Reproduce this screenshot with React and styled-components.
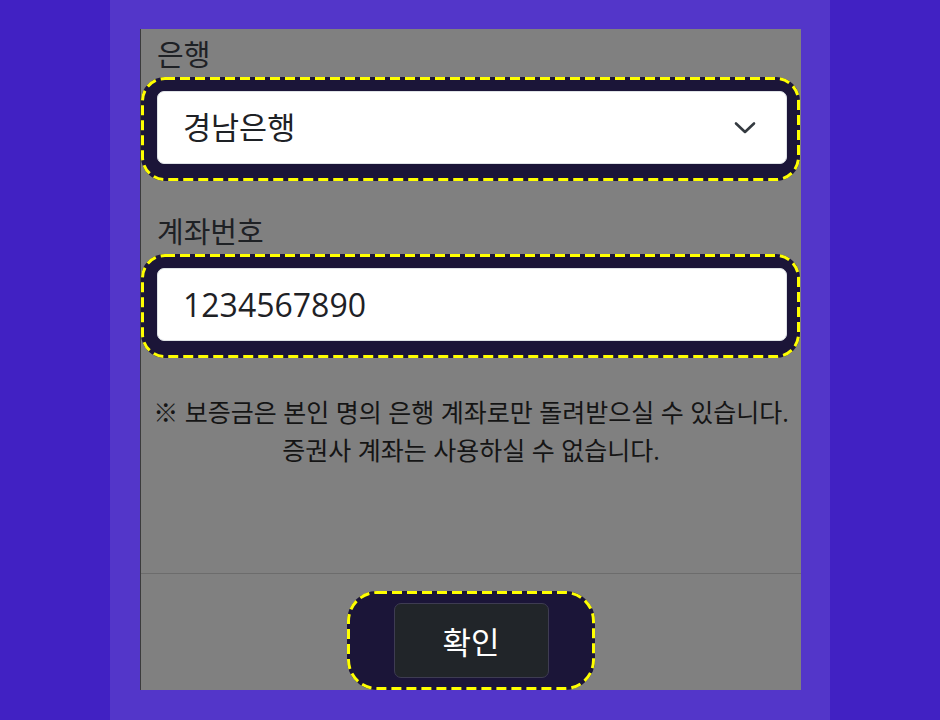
import React from "react";
import styled, { createGlobalStyle } from "styled-components";

const Global = createGlobalStyle`
  html, body { margin: 0; padding: 0; }
  body {
    background: #4121c3;
    font-family: "Open Sans", "Noto Sans CJK KR", sans-serif;
    color: #212529;
  }
  #root { width: 940px; height: 720px; }
`;

const Stage = styled.div`
  width: 940px;
  height: 720px;
  display: flex;
  justify-content: flex-start;
  background: #4121c3;
`;

const Band = styled.div`
  margin-left: 110px;
  width: 720px;
  height: 720px;
  background: #5336c9;
  padding: 29px 29px 0 30px;
  box-sizing: border-box;
`;

const Panel = styled.div`
  width: 661px;
  height: 661px;
  box-sizing: border-box;
  background: #808080;
  border-left: 1px solid #3c3c3c;
  display: flex;
  flex-direction: column;
  overflow: hidden;
`;

const Body = styled.div`
  flex: 1;
  display: flex;
  flex-direction: column;
  padding: 6px 0 0 0;
`;

const Label = styled.div`
  font-size: 29px;
  line-height: 39px;
  padding-left: 16px;
  margin-top: ${(p) => p.$top}px;
  margin-bottom: 3px;
  color: #1e2125;
`;

const FocusRing = styled.div`
  position: relative;
  width: 659px;
  box-sizing: border-box;
  background: #1b1538;
  border-radius: ${(p) => p.$radius || 24}px;
  padding: ${(p) => p.$pad};
  display: flex;
  justify-content: center;
`;

const DashSvg = styled.svg`
  position: absolute;
  inset: 0;
  width: 100%;
  height: 100%;
  overflow: visible;
  pointer-events: none;
`;

const DashRect = styled.rect`
  x: 1.5px;
  y: 1.5px;
  width: calc(100% - 3px);
  height: calc(100% - 3px);
  fill: none;
  stroke: #ffff00;
  stroke-width: 3px;
  stroke-dasharray: 10 5;
`;

const Dashed = ({ radius }) => (
  <DashSvg aria-hidden="true">
    <DashRect rx={radius - 1.5} ry={radius - 1.5} />
  </DashSvg>
);

const Field = styled.div`
  flex: 1;
  height: 73px;
  box-sizing: border-box;
  background: #ffffff;
  border: 1px solid #dee2e6;
  border-radius: 7px;
  display: flex;
  align-items: center;
  justify-content: space-between;
  padding: 0 30px 0 25px;
  color: #1e2125;
`;

const SelectText = styled.span`
  font-size: 30.5px;
  line-height: 1;
`;

const InputText = styled.span`
  font-size: 32px;
  line-height: 1;
  font-family: "Open Sans", sans-serif;
`;

const Notice = styled.p`
  margin: 35px 0 0 0;
  padding: 0;
  text-align: center;
  font-size: 25px;
  line-height: 38px;
  color: #151515;
  white-space: nowrap;
`;

const Footer = styled.div`
  height: 117px;
  box-sizing: border-box;
  border-top: 1px solid #6c6c6c;
  display: flex;
  justify-content: center;
  align-items: flex-start;
  padding-top: 17px;
`;

const ButtonWrap = styled(FocusRing)`
  width: 248px;
`;

const Button = styled.button`
  width: 155px;
  height: 75px;
  box-sizing: border-box;
  background: #212529;
  border: 1px solid #3e3c52;
  border-radius: 7px;
  color: #ffffff;
  font-family: "Open Sans", "Noto Sans CJK KR", sans-serif;
  font-size: 31px;
  cursor: pointer;
  padding: 0;
`;

const Chevron = () => (
  <svg width="22" height="14" viewBox="0 0 22 14" fill="none">
    <path d="M2 2.5 L11 11 L20 2.5" stroke="#343a40" strokeWidth="2.6" strokeLinecap="round" strokeLinejoin="round" />
  </svg>
);

export default function App() {
  return (
    <>
      <Global />
      <Stage>
        <Band>
          <Panel>
            <Body>
              <Label $top={0}>은행</Label>
              <FocusRing $pad="14px 13px 17px 16px">
                <Dashed radius={24} />
                <Field>
                  <SelectText>경남은행</SelectText>
                  <Chevron />
                </Field>
              </FocusRing>
              <Label $top={31}>계좌번호</Label>
              <FocusRing $pad="14px 13px 17px 16px">
                <Dashed radius={24} />
                <Field>
                  <InputText>1234567890</InputText>
                </Field>
              </FocusRing>
              <Notice>
                ※ 보증금은 본인 명의 은행 계좌로만 돌려받으실 수 있습니다.
                <br />
                증권사 계좌는 사용하실 수 없습니다.
              </Notice>
            </Body>
            <Footer>
              <ButtonWrap $pad="12px 0" $radius={30}>
                <Dashed radius={30} />
                <Button>확인</Button>
              </ButtonWrap>
            </Footer>
          </Panel>
        </Band>
      </Stage>
    </>
  );
}
